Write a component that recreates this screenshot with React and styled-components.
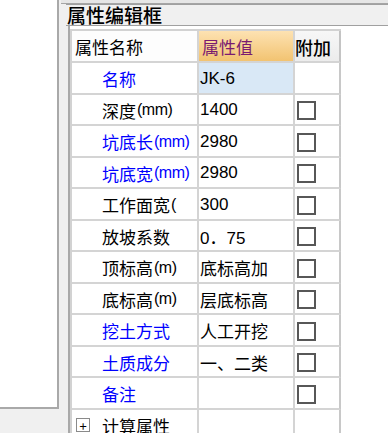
import React from "react";
import styled, { createGlobalStyle } from "styled-components";

const GlobalStyle = createGlobalStyle`
  html, body {
    margin: 0;
    padding: 0;
    background: #ffffff;
  }
  body {
    font-family: "Noto Sans CJK SC", "Noto Sans", sans-serif;
    overflow: hidden;
  }
`;

const rows = [
  { name: "名称", value: "JK-6", blue: true, selected: true, noCheck: true },
  { name: "深度", unit: "(mm)", value: "1400" },
  { name: "坑底长", unit: "(mm)", value: "2980", blue: true },
  { name: "坑底宽", unit: "(mm)", value: "2980", blue: true },
  { name: "工作面宽", unit: "(", value: "300" },
  { name: "放坡系数", value: "0．75" },
  { name: "顶标高", unit: "(m)", value: "底标高加" },
  { name: "底标高", unit: "(m)", value: "层底标高" },
  { name: "挖土方式", value: "人工开挖", blue: true },
  { name: "土质成分", value: "一、二类", blue: true },
  { name: "备注", value: "", blue: true },
];

const App = () => {
  return (
    <>
      <GlobalStyle />
      <Page>
        <LeftPane>
          <LeftBox />
          <LeftFoot />
        </LeftPane>
        <RightPane>
          <TopStrip />
          <TitleBar>属性编辑框</TitleBar>
          <GridPanel>
            <Grid>
              <HeadCell>属性名称</HeadCell>
              <HeadCell $accent>属性值</HeadCell>
              <HeadCell $gray>附加</HeadCell>

              {rows.map((row) => (
                <React.Fragment key={row.name}>
                  <NameCell $blue={row.blue}>
                    {row.name}
                    {row.unit && <Unit>{row.unit}</Unit>}
                  </NameCell>
                  <ValueCell $selected={row.selected}>{row.value}</ValueCell>
                  <CheckCell>{!row.noCheck && <CheckBox />}</CheckCell>
                </React.Fragment>
              ))}

              <NameCell $group>
                <Expander>+</Expander>
                计算属性
              </NameCell>
              <ValueCell />
              <CheckCell />
            </Grid>
          </GridPanel>
        </RightPane>
      </Page>
    </>
  );
};

export default App;

const Page = styled.div`
  display: flex;
  width: 388px;
  height: 433px;
  overflow: hidden;
  background: #f0f0f0;
`;

const LeftPane = styled.div`
  width: 59px;
  display: flex;
  flex-direction: column;
`;

const LeftBox = styled.div`
  height: 409px;
  box-sizing: border-box;
  background: #ffffff;
  border-right: 2px solid #a9a9a9;
  border-bottom: 2px solid #a9a9a9;
`;

const LeftFoot = styled.div`
  flex: 1;
  background: #f0f0f0;
`;

const RightPane = styled.div`
  flex: 1;
  display: flex;
  flex-direction: column;
  padding-left: 9px;
  min-width: 0;
`;

const TopStrip = styled.div`
  height: 12px;
  box-sizing: border-box;
  margin-left: -7px;
  border-top: 3px solid #e6e6e6;
  background: #f0f0f0;

  &::after {
    content: "";
    display: block;
    height: 1px;
    background: #a5a5a5;
  }
`;

const TitleBar = styled.div`
  height: 22px;
  box-sizing: border-box;
  margin-left: -2px;
  border-top: 1px solid #a0a0a0;
  border-bottom: 1px solid #a0a0a0;
  background: #f0f0f0;
  padding-left: 1px;
  font-size: 19px;
  font-weight: 500;
  line-height: 20px;
  color: #000000;
  white-space: nowrap;
`;

const GridPanel = styled.div`
  flex: 1;
  background: #ffffff;
  border-left: 2px solid #a9a9a9;
  padding-top: 3px;
`;

const Grid = styled.div`
  display: grid;
  grid-template-columns: 127px 96px 46px;
  grid-auto-rows: 31.5px;
  grid-template-rows: 32px;
  width: max-content;
  border-left: 2px solid #d2d2d2;
  border-top: 2px solid #d2d2d2;
`;

const Cell = styled.div`
  box-sizing: border-box;
  border-right: 2px solid #d4d4d4;
  border-bottom: 2px solid #d4d4d4;
  display: flex;
  align-items: center;
  overflow: hidden;
  white-space: nowrap;
  font-size: 17px;
`;

const HeadCell = styled(Cell)`
  padding-left: ${(p) => (p.$gray ? "0" : "3px")};
  color: ${(p) => (p.$accent ? "#7a1b70" : "#000000")};
  background: ${(p) =>
    p.$accent
      ? "linear-gradient(#fde2b2, #f2c371)"
      : p.$gray
      ? "linear-gradient(#f7f7f7, #ececec)"
      : "#fdfdfd"};
  border-right-color: ${(p) => (p.$gray ? "#c4c4c4" : "#d4d4d4")};
  font-size: ${(p) => (p.$gray ? "18px" : "17px")};
  font-weight: ${(p) => (p.$gray ? 500 : 400)};
  padding-top: 1px;
`;

const NameCell = styled(Cell)`
  padding-left: ${(p) => (p.$group ? "4px" : "30px")};
  color: ${(p) => (p.$blue ? "#0000ff" : "#000000")};
  padding-top: 2px;
`;

const Unit = styled.span`
  font-family: "Liberation Sans", sans-serif;
  font-size: 16px;
  letter-spacing: -0.5px;
  margin-left: 1px;
`;

const ValueCell = styled(Cell)`
  padding-left: 1px;
  padding-top: 2px;
  font-family: "Liberation Sans", "Noto Sans CJK SC", sans-serif;
  color: #000000;
  background: ${(p) => (p.$selected ? "#d9e8f6" : "transparent")};
`;

const CheckCell = styled(Cell)`
  padding-left: 2px;
  padding-top: 3px;
  border-right-color: #c8c8c8;
`;

const CheckBox = styled.span`
  display: block;
  width: 19px;
  height: 19px;
  box-sizing: border-box;
  border: 2px solid #575757;
  background: #ffffff;
`;

const Expander = styled.span`
  display: inline-flex;
  align-items: center;
  justify-content: center;
  width: 14px;
  height: 14px;
  box-sizing: border-box;
  border: 1px solid #8a8a8a;
  margin-right: 12px;
  font-size: 13px;
  line-height: 1;
  color: #000000;
`;
